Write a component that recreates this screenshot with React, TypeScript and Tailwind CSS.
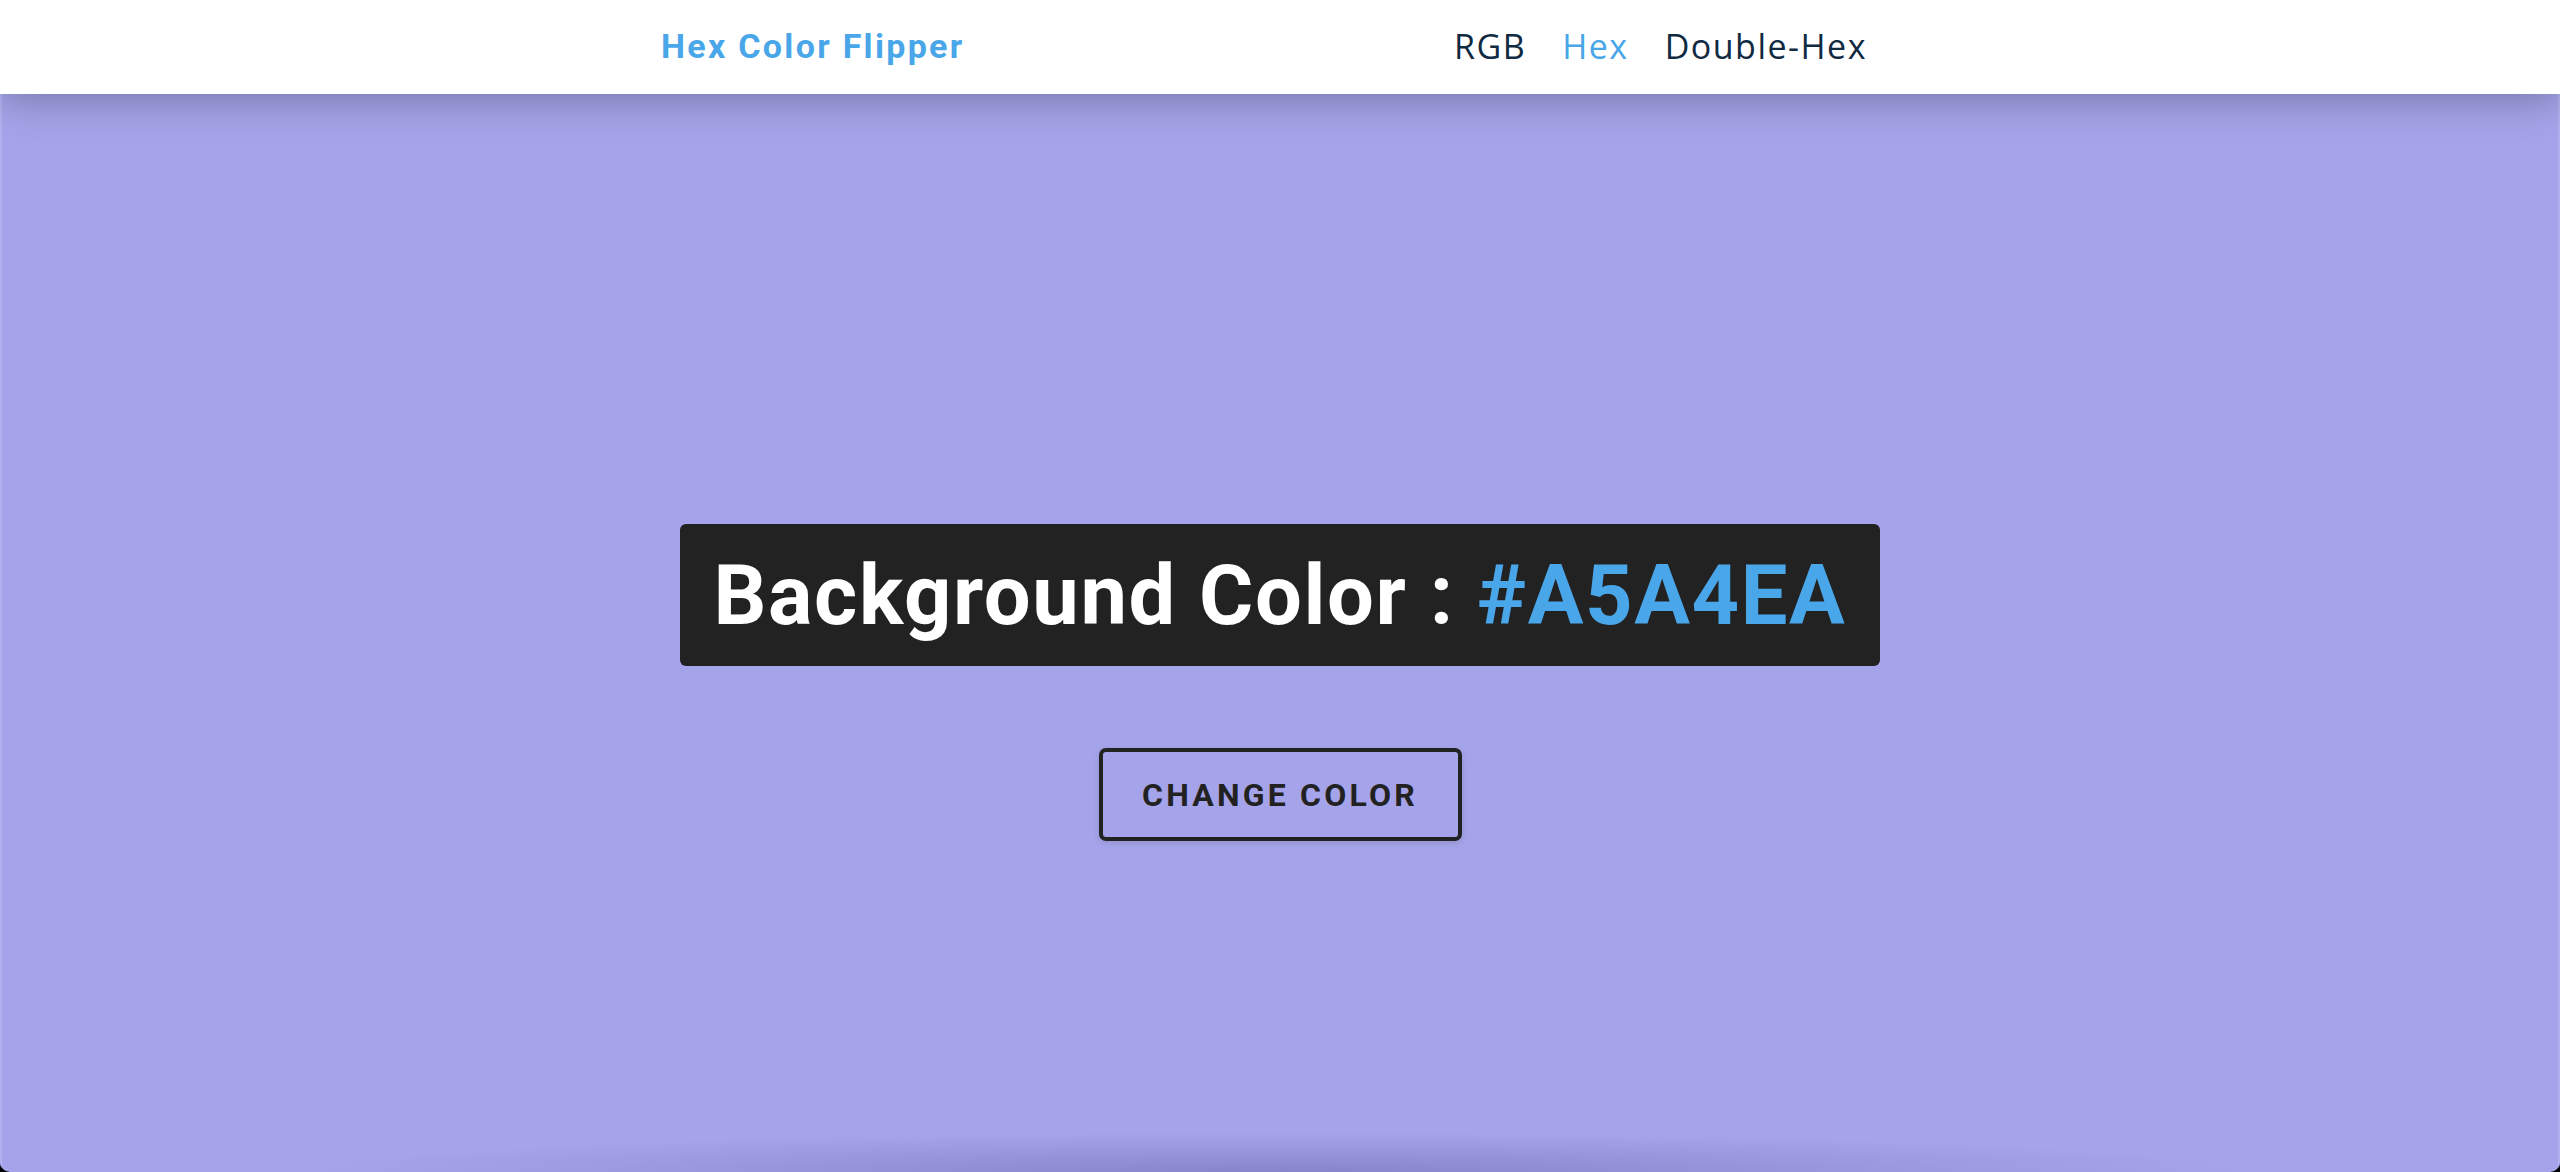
import React from "react";

export default function App() {
  return (
    <div className="h-screen w-full overflow-hidden bg-black">
      <div className="relative flex h-full flex-col overflow-hidden rounded-b-[10px] bg-[#A5A4EA]">
        <nav className="relative z-10 h-[94px] shrink-0 bg-white shadow-[0_6px_40px_rgba(0,0,0,0.28)]">
          <div className="ml-[661px] flex h-full w-[1206px] items-center justify-between pb-[2px]">
            <h4
              className="text-[34px] font-bold leading-none tracking-[2.3px] text-[#49a6e9]"
              style={{ fontFamily: "Roboto, 'Liberation Sans', sans-serif" }}
            >
              Hex Color Flipper
            </h4>
            <ul
              className="flex items-center gap-[36px] text-[34px] leading-none tracking-[1.5px] text-[#102a42]"
              style={{ fontFamily: "'Open Sans', 'Liberation Sans', sans-serif" }}
            >
              <li>RGB</li>
              <li className="text-[#49a6e9]">Hex</li>
              <li>Double-Hex</li>
            </ul>
          </div>
        </nav>
        <main
          className="flex flex-1 flex-col items-center border-x-2 border-[#b2b1f0] pt-[430px]"
          style={{ fontFamily: "Roboto, 'Liberation Sans', sans-serif" }}
        >
          <h2 className="flex h-[142px] w-[1200px] items-center justify-center rounded-[6px] bg-[#222222] text-[83px] font-bold leading-none tracking-[1.6px] text-white">
            Background Color :&nbsp;<span className="text-[#49a6e9]">#A5A4EA</span>
          </h2>
          <button className="mt-[82px] flex h-[93px] w-[363px] items-center justify-center rounded-[7px] border-[4px] border-[#222222] bg-transparent text-[32px] font-bold uppercase leading-none tracking-[3.2px] text-[#222222] shadow-[0_2px_6px_rgba(0,0,0,0.12)]">
            Change Color
          </button>
        </main>
        <div className="pointer-events-none absolute bottom-[-40px] left-[300px] right-[300px] h-[80px] rounded-[50%] bg-[radial-gradient(ellipse_at_center,rgba(60,50,120,0.28),rgba(60,50,120,0)_70%)]" />
      </div>
    </div>
  );
}
